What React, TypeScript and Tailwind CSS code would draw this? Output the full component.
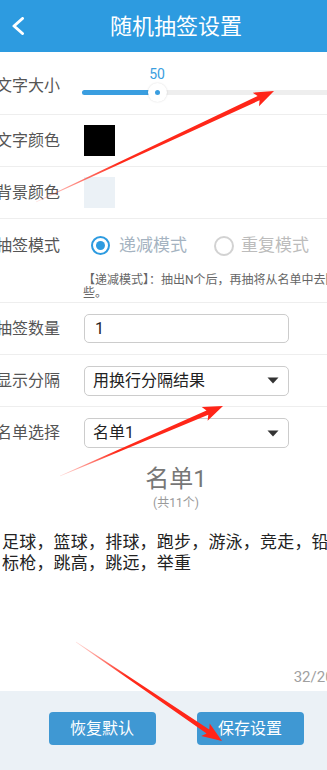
import React from 'react';

const arrows = [
  { id: 'a1', x1: 36, y1: 202, x2: 274, y2: 91 },
  { id: 'a2', x1: 60, y1: 476, x2: 223, y2: 406 },
  { id: 'a3', x1: 76, y1: 642, x2: 222, y2: 741 },
];

function arrowShape(x1: number, y1: number, x2: number, y2: number) {
  const dx = x2 - x1;
  const dy = y2 - y1;
  const len = Math.hypot(dx, dy);
  const ux = dx / len;
  const uy = dy / len;
  const nx = -uy;
  const ny = ux;
  const head = 17;
  const hw = 7.5;
  const sw = 2.3;
  const bx = x2 - ux * head;
  const by = y2 - uy * head;
  const wx = x2 - ux * (head + 3);
  const wy = y2 - uy * (head + 3);
  const pts = [
    [x1 + nx * 0.3, y1 + ny * 0.3],
    [bx + nx * sw, by + ny * sw],
    [wx + nx * hw, wy + ny * hw],
    [x2, y2],
    [wx - nx * hw, wy - ny * hw],
    [bx - nx * sw, by - ny * sw],
    [x1 - nx * 0.3, y1 - ny * 0.3],
  ];
  return pts.map((p) => p.map((v) => v.toFixed(1)).join(',')).join(' ');
}

function Arrows() {
  return (
    <svg className="pointer-events-none absolute inset-0" width="327" height="770" viewBox="0 0 327 770">
      <defs>
        {arrows.map((a) => (
          <linearGradient key={a.id} id={`g-${a.id}`} gradientUnits="userSpaceOnUse" x1={a.x1} y1={a.y1} x2={a.x2} y2={a.y2}>
            <stop offset="0" stopColor="#ff2a1a" stopOpacity="0.15" />
            <stop offset="0.35" stopColor="#ff2a1a" stopOpacity="1" />
            <stop offset="1" stopColor="#ff2418" stopOpacity="1" />
          </linearGradient>
        ))}
      </defs>
      {arrows.map((a) => (
        <polygon key={a.id} points={arrowShape(a.x1, a.y1, a.x2, a.y2)} fill={`url(#g-${a.id})`} />
      ))}
    </svg>
  );
}

function Row({ label, children, className = '' }: { label: string; children?: React.ReactNode; className?: string }) {
  return (
    <div className={`flex h-[52px] items-center border-b border-[#eeeeee] pl-[10px] ${className}`}>
      <span className="w-[88px] shrink-0 text-[16px] text-[#555]">{label}</span>
      {children}
    </div>
  );
}

function Caret() {
  return (
    <svg width="12" height="7" viewBox="0 0 12 7">
      <path d="M0.5 0.5 H11.5 L6 6.5 Z" fill="#333" />
    </svg>
  );
}

export default function App() {
  return (
    <div className="relative h-[770px] w-[327px] overflow-hidden bg-white font-[Roboto,'Noto_Sans_CJK_SC',sans-serif]">
      <div className="-ml-[14px] flex h-full w-[380px] flex-col">
        <header className="relative flex h-[52px] shrink-0 items-center justify-center bg-[#2d9be0]">
          <svg className="absolute left-[25px] top-[17px]" width="14" height="18" viewBox="0 0 14 18">
            <polyline points="11.5,1.5 3,9 11.5,16.5" fill="none" stroke="#fff" strokeWidth="3" strokeLinecap="round" strokeLinejoin="round" />
          </svg>
          <h1 className="text-[22px] text-white">随机抽签设置</h1>
        </header>

        <div className="flex h-[63px] items-center border-b border-[#eeeeee] pl-[10px] pt-[6px]">
          <span className="w-[88px] shrink-0 text-[16px] text-[#555]">文字大小</span>
          <div className="relative -ml-[2px] -mt-[6px] h-[63px] flex-1">
            <span className="absolute left-[75px] top-[14px] -translate-x-1/2 text-[14px] leading-[16px] text-[#3a9ee0]">50</span>
            <div className="absolute left-0 right-0 top-[38px] h-[5px] rounded-full bg-[#eeeeee]" />
            <div className="absolute left-0 top-[38px] h-[5px] w-[75px] rounded-full bg-[#3a9ee0]" />
            <div className="absolute left-[66px] top-[31px] flex h-[19px] w-[19px] items-center justify-center rounded-full bg-white shadow-[0_0_2px_rgba(0,0,0,0.15)]">
              <div className="h-[5px] w-[5px] rounded-full bg-[#3a9ee0]" />
            </div>
          </div>
        </div>

        <Row label="文字颜色">
          <div className="h-[31px] w-[31px] bg-black" />
        </Row>
        <Row label="背景颜色">
          <div className="h-[31px] w-[31px] bg-[#ebf1f6]" />
        </Row>

        <div className="flex h-[84px] flex-col border-b border-[#eeeeee] pl-[10px]">
          <div className="flex h-[53px] items-center">
            <span className="w-[88px] shrink-0 text-[16px] text-[#555]">抽签模式</span>
            <div className="ml-[7px] flex h-[19px] w-[19px] items-center justify-center rounded-full border-2 border-[#2d9be0]">
              <div className="h-[9px] w-[9px] rounded-full bg-[#2d9be0]" />
            </div>
            <span className="ml-[9px] text-[17px] text-[#a5b3c1]">递减模式</span>
            <div className="ml-[27px] h-[20px] w-[20px] rounded-full border-2 border-[#d2d2d2]" />
            <span className="ml-[7px] text-[17px] text-[#bcbcbc]">重复模式</span>
          </div>
          <p className="ml-[87px] mt-[2px] w-[272px] text-[12px] leading-[13px] text-[#666]">
            【递减模式】：抽出N个后，再抽将从名单中去除这些。
          </p>
        </div>

        <Row label="抽签数量">
          <div className="flex h-[29px] w-[205px] items-center rounded-[5px] border border-[#cccccc] px-[10px] text-[16px] text-[#222]">1</div>
        </Row>
        <Row label="显示分隔">
          <div className="flex h-[30px] w-[205px] items-center justify-between rounded-[5px] border border-[#cccccc] pl-[8px] pr-[9px] text-[16px] text-[#222]">
            <span>用换行分隔结果</span>
            <Caret />
          </div>
        </Row>
        <Row label="名单选择" className="border-b-0">
          <div className="flex h-[30px] w-[205px] items-center justify-between rounded-[5px] border border-[#cccccc] pl-[8px] pr-[9px] text-[16px] text-[#222]">
            <span>名单1</span>
            <Caret />
          </div>
        </Row>

        <div className="flex flex-1 flex-col">
          <div className="mt-[6px] text-center text-[24px] leading-[28px] text-[#777]">名单1</div>
          <div className="mt-[2px] text-center text-[12px] leading-[16px] text-[#999]">(共11个)</div>
          <p className="ml-[16px] mt-[21px] w-[364px] text-[17px] leading-[21px] tracking-[0.2px] text-[#222]">
            足球，篮球，排球，跑步，游泳，竞走，铅球，标枪，跳高，跳远，举重
          </p>
          <div className="mt-auto pb-[4px] pr-[24px] text-right text-[15px] leading-[20px] text-[#a0a0a0]">32/200</div>
        </div>

        <footer className="flex h-[79px] shrink-0 justify-center gap-[41px] bg-[#ebf1f6] pt-[21px]">
          <button className="h-[33px] w-[107px] rounded-[4px] bg-[#3f98d3] text-[16px] text-white">恢复默认</button>
          <button className="h-[33px] w-[107px] rounded-[4px] bg-[#3f98d3] text-[16px] text-white">保存设置</button>
        </footer>
      </div>
      <Arrows />
    </div>
  );
}
